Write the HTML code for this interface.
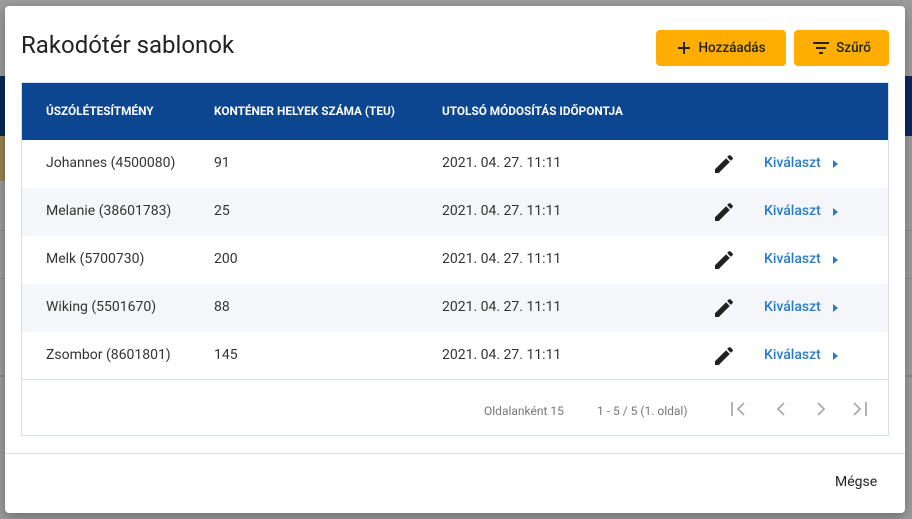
<!DOCTYPE html>
<html><head><meta charset="utf-8"><style>
*{box-sizing:border-box;margin:0;padding:0}
body{width:912px;height:519px;overflow:hidden;background:#9c9c9c;font-family:"Roboto","Liberation Sans",sans-serif;position:relative}
.bg-blue{position:absolute;left:0;right:0;top:76px;height:60px;background:#0b2a57}
.bg-yel{position:absolute;left:0;width:10px;top:136px;height:45px;background:#9a8552}
.bgl{position:absolute;left:0;right:0;height:1px;background:#8a8a8a}
.dlg{position:absolute;left:5px;top:6px;width:900px;height:507px;background:#fff;border-radius:4px;box-shadow:0 4px 12px rgba(0,0,0,.3)}
h1{position:absolute;left:16px;top:25px;font-size:24px;font-weight:400;color:#222}
.btn{position:absolute;top:24px;height:36px;background:#ffad00;border-radius:4px;font-size:13.5px;color:#222;font-weight:500;display:flex;align-items:center;justify-content:center;gap:6px}
.tbl{position:absolute;left:16px;top:76px;width:868px;height:354px;border:1px solid #d6dfec}
.hd{position:absolute;left:0;top:0;width:866px;height:57px;background:#0d4690;color:#fff;font-size:11.8px;font-weight:700}
.hd span{position:absolute;top:21px}
.row{position:absolute;left:0;width:866px;height:48px;font-size:14px;color:#333}
.row span{position:absolute;top:15px}
.row.alt{background:#f4f6fa}
.k{color:#2a7cc4;font-weight:500}
.ft{position:absolute;left:0;top:296px;width:866px;border-top:1px solid #d6dfec;height:57px;font-size:12px;color:#777}
.ft span{position:absolute;top:24px}
</style></head><body>
<div class="bg-blue"></div><div class="bg-yel"></div>
<div class="bgl" style="top:230px"></div><div class="bgl" style="top:278px"></div><div class="bgl" style="top:375px;height:2px"></div>
<div class="dlg">
<h1>Rakodótér sablonok</h1>
<div class="btn" style="left:651px;width:130px"><svg width="16" height="16" viewBox="0 0 16 16"><path d="M8 2v12M2 8h12" stroke="#222" stroke-width="2"/></svg>Hozzáadás</div>
<div class="btn" style="left:789px;width:95px"><svg width="18" height="14" viewBox="0 0 18 14"><path d="M1 2h16M4 7h10M7 12h4" stroke="#222" stroke-width="2"/></svg>Szűrő</div>
<div class="tbl">
<div class="hd"><span style="left:24px">ÚSZÓLÉTESÍTMÉNY</span><span style="left:192px">KONTÉNER HELYEK SZÁMA (TEU)</span><span style="left:420px">UTOLSÓ MÓDOSÍTÁS IDŐPONTJA</span></div>
<div class="row" style="top:57px"><span style="left:24px">Johannes (4500080)</span><span style="left:192px">91</span><span style="left:420px">2021. 04. 27. 11:11</span><svg style="position:absolute;left:690px;top:12px" width="24" height="24" viewBox="0 0 24 24"><path d="M3 17.25V21h3.75L17.81 9.94l-3.75-3.75L3 17.25zM20.71 7.04a1 1 0 000-1.41l-2.34-2.34a1 1 0 00-1.41 0l-1.83 1.83 3.75 3.75 1.83-1.83z" fill="#222"/></svg><span class="k" style="left:742px">Kiválaszt</span><svg style="position:absolute;left:810px;top:19px" width="8" height="10"><path d="M1 1l5 4-5 4z" fill="#2a7cc4"/></svg></div>
<div class="row alt" style="top:105px"><span style="left:24px">Melanie (38601783)</span><span style="left:192px">25</span><span style="left:420px">2021. 04. 27. 11:11</span><svg style="position:absolute;left:690px;top:12px" width="24" height="24" viewBox="0 0 24 24"><path d="M3 17.25V21h3.75L17.81 9.94l-3.75-3.75L3 17.25zM20.71 7.04a1 1 0 000-1.41l-2.34-2.34a1 1 0 00-1.41 0l-1.83 1.83 3.75 3.75 1.83-1.83z" fill="#222"/></svg><span class="k" style="left:742px">Kiválaszt</span><svg style="position:absolute;left:810px;top:19px" width="8" height="10"><path d="M1 1l5 4-5 4z" fill="#2a7cc4"/></svg></div>
<div class="row" style="top:153px"><span style="left:24px">Melk (5700730)</span><span style="left:192px">200</span><span style="left:420px">2021. 04. 27. 11:11</span><svg style="position:absolute;left:690px;top:12px" width="24" height="24" viewBox="0 0 24 24"><path d="M3 17.25V21h3.75L17.81 9.94l-3.75-3.75L3 17.25zM20.71 7.04a1 1 0 000-1.41l-2.34-2.34a1 1 0 00-1.41 0l-1.83 1.83 3.75 3.75 1.83-1.83z" fill="#222"/></svg><span class="k" style="left:742px">Kiválaszt</span><svg style="position:absolute;left:810px;top:19px" width="8" height="10"><path d="M1 1l5 4-5 4z" fill="#2a7cc4"/></svg></div>
<div class="row alt" style="top:201px"><span style="left:24px">Wiking (5501670)</span><span style="left:192px">88</span><span style="left:420px">2021. 04. 27. 11:11</span><svg style="position:absolute;left:690px;top:12px" width="24" height="24" viewBox="0 0 24 24"><path d="M3 17.25V21h3.75L17.81 9.94l-3.75-3.75L3 17.25zM20.71 7.04a1 1 0 000-1.41l-2.34-2.34a1 1 0 00-1.41 0l-1.83 1.83 3.75 3.75 1.83-1.83z" fill="#222"/></svg><span class="k" style="left:742px">Kiválaszt</span><svg style="position:absolute;left:810px;top:19px" width="8" height="10"><path d="M1 1l5 4-5 4z" fill="#2a7cc4"/></svg></div>
<div class="row" style="top:249px"><span style="left:24px">Zsombor (8601801)</span><span style="left:192px">145</span><span style="left:420px">2021. 04. 27. 11:11</span><svg style="position:absolute;left:690px;top:12px" width="24" height="24" viewBox="0 0 24 24"><path d="M3 17.25V21h3.75L17.81 9.94l-3.75-3.75L3 17.25zM20.71 7.04a1 1 0 000-1.41l-2.34-2.34a1 1 0 00-1.41 0l-1.83 1.83 3.75 3.75 1.83-1.83z" fill="#222"/></svg><span class="k" style="left:742px">Kiválaszt</span><svg style="position:absolute;left:810px;top:19px" width="8" height="10"><path d="M1 1l5 4-5 4z" fill="#2a7cc4"/></svg></div>
<div class="ft"><span style="left:462px">Oldalanként 15</span><span style="left:575px">1 - 5 / 5 (1. oldal)</span>
<svg style="position:absolute;left:706px;top:20px" width="150" height="18" viewBox="0 0 150 18" fill="none" stroke="#aaa" stroke-width="1.8"><path d="M4 2v14M16 3l-6 6 6 6"/><path d="M56 3l-6 6 6 6"/><path d="M90 3l6 6-6 6"/><path d="M126 3l6 6-6 6M138 2v14"/></svg></div>
</div>
<div style="position:absolute;left:0;right:0;top:447px;height:1px;background:#ddd"></div>
<div style="position:absolute;left:830px;top:468px;font-size:14px;color:#222">Mégse</div>
</div>
</body></html>
